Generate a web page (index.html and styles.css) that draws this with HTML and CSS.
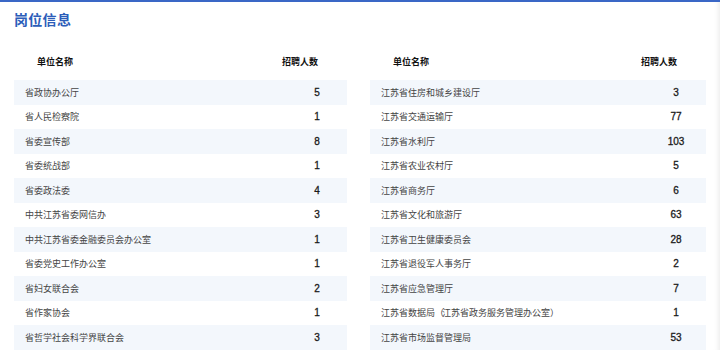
FILE: index.html
```html
<!DOCTYPE html>
<html lang="zh">
<head>
<meta charset="utf-8">
<link rel="stylesheet" href="styles.css">
</head>
<body>
<div class="page">
  <h1 class="title">岗位信息</h1>
  <div class="tables">
    <div class="table">
      <div class="head"><span class="name">单位名称</span><span class="num">招聘人数</span></div>
      <div class="row"><span class="name">省政协办公厅</span><span class="num">5</span></div>
      <div class="row"><span class="name">省人民检察院</span><span class="num">1</span></div>
      <div class="row"><span class="name">省委宣传部</span><span class="num">8</span></div>
      <div class="row"><span class="name">省委统战部</span><span class="num">1</span></div>
      <div class="row"><span class="name">省委政法委</span><span class="num">4</span></div>
      <div class="row"><span class="name">中共江苏省委网信办</span><span class="num">3</span></div>
      <div class="row"><span class="name">中共江苏省委金融委员会办公室</span><span class="num">1</span></div>
      <div class="row"><span class="name">省委党史工作办公室</span><span class="num">1</span></div>
      <div class="row"><span class="name">省妇女联合会</span><span class="num">2</span></div>
      <div class="row"><span class="name">省作家协会</span><span class="num">1</span></div>
      <div class="row"><span class="name">省哲学社会科学界联合会</span><span class="num">3</span></div>
    </div>
    <div class="table">
      <div class="head"><span class="name">单位名称</span><span class="num">招聘人数</span></div>
      <div class="row"><span class="name">江苏省住房和城乡建设厅</span><span class="num">3</span></div>
      <div class="row"><span class="name">江苏省交通运输厅</span><span class="num">77</span></div>
      <div class="row"><span class="name">江苏省水利厅</span><span class="num">103</span></div>
      <div class="row"><span class="name">江苏省农业农村厅</span><span class="num">5</span></div>
      <div class="row"><span class="name">江苏省商务厅</span><span class="num">6</span></div>
      <div class="row"><span class="name">江苏省文化和旅游厅</span><span class="num">63</span></div>
      <div class="row"><span class="name">江苏省卫生健康委员会</span><span class="num">28</span></div>
      <div class="row"><span class="name">江苏省退役军人事务厅</span><span class="num">2</span></div>
      <div class="row"><span class="name">江苏省应急管理厅</span><span class="num">7</span></div>
      <div class="row"><span class="name">江苏省数据局<span class="paren">（</span>江苏省政务服务管理办公室<span class="paren">）</span></span><span class="num">1</span></div>
      <div class="row"><span class="name">江苏省市场监督管理局</span><span class="num">53</span></div>
    </div>
  </div>
</div>
</body>
</html>
```

FILE: styles.css
```css
* { box-sizing: border-box; }
html, body {
  margin: 0;
  padding: 0;
  background: #fff;
}
body {
  font-family: "Liberation Sans", "Noto Sans CJK SC", sans-serif;
  color: #333;
}
.page {
  width: 720px;
  height: 350px;
  overflow: hidden;
  border-top: 2px solid #3a67c6;
  padding: 0 14px;
  box-shadow: inset -6px 0 6px -6px rgba(0,0,0,0.12);
}
.title {
  margin: 0;
  padding-top: 8px;
  font-size: 14px;
  line-height: 20px;
  font-weight: bold;
  color: #2c5db9;
  letter-spacing: 0.3px;
}
.tables {
  display: grid;
  grid-template-columns: 333px 336px;
  column-gap: 23px;
  margin-top: 12px;
}
.head {
  display: flex;
  align-items: center;
  height: 38px;
  font-size: 9px;
  font-weight: bold;
  color: #111;
}
.head .name {
  flex: 1;
  padding-left: 23px;
}
.head .num {
  padding-right: 29px;
}
.row {
  display: flex;
  align-items: center;
  height: 24.5px;
  font-size: 9px;
  color: #444;
}
.row:nth-child(even) {
  background: #f3f7fc;
}
.row .name {
  flex: 1;
  padding-left: 11px;
}
.paren {
  letter-spacing: -2px;
}
.row .num {
  width: 40px;
  margin-right: 10px;
  text-align: center;
  font-size: 10px;
  color: #1a1a1a;
  -webkit-text-stroke: 0.3px #1a1a1a;
}
```
